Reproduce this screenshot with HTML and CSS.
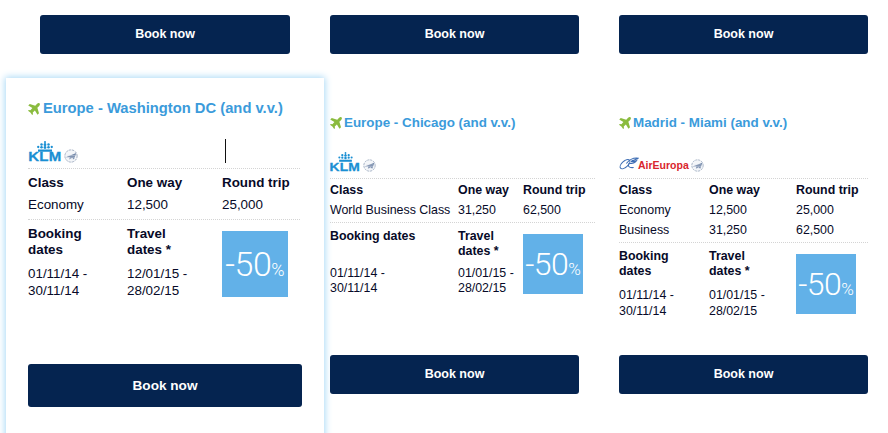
FILE: index.html
```html
<!DOCTYPE html>
<html lang="en">
<head>
<meta charset="utf-8">
<title>Flight offers</title>
<link rel="stylesheet" href="styles.css">
</head>
<body>
<svg class="defs" width="0" height="0" aria-hidden="true">
  <symbol id="plane" viewBox="0 0 24 24">
    <path d="M23.200.8c-1.300-1.300-3.600-.6-5 .8l-3.700 3.700L3.500 2 .5 5l8.300 5.200-4 4.300-3.200-.5L0 15.700l4.800 3.500L8.300 24l1.700-1.600-.5-3.200 4.300-4 5.200 8.300 3-3-3.300-11 3.700-3.700c1.400-1.400 2.100-3.500.8-4.800z"/>
  </symbol>
  <symbol id="crown" viewBox="0 0 32 22">
    <circle cx="16" cy="2" r="2"/><rect x="15" y="3" width="2" height="4"/>
    <circle cx="9" cy="7" r="2.500"/><circle cx="16" cy="7.500" r="2.800"/><circle cx="23" cy="7" r="2.500"/>
    <circle cx="2.500" cy="12" r="2.300"/><circle cx="9" cy="12.500" r="2.500"/><circle cx="16" cy="13" r="2.800"/><circle cx="23" cy="12.500" r="2.500"/><circle cx="29.500" cy="12" r="2.300"/>
    <rect x="2" y="17" width="28" height="4.500"/>
  </symbol>
  <symbol id="skyteam" viewBox="0 0 24 24">
    <circle cx="12" cy="12" r="10.500" fill="#f4f6f9" stroke="#98a6bc" stroke-width="1.500" stroke-dasharray="4 1.500"/>
    <path d="M3 14 21 7l-4 11-3-3-5 3 1-4z" fill="#6f84a6"/>
    <path d="M6 11h13M6 14h13M9 17h7" stroke="#dfe5ee" stroke-width=".9" fill="none"/>
  </symbol>
  <symbol id="swirl" viewBox="0 0 30 20">
    <ellipse cx="9" cy="11" rx="9" ry="4.500" transform="rotate(-42 9 11)" fill="none" stroke="#3f6fb5" stroke-width="1.600"/>
    <path d="M11 10c4-5 11-9 18-8-3 2-7 3-11 5 3 0 6 0 8-1-2 3-7 4-11 4-2 3-1 7 7 6" fill="none" stroke="#3f6fb5" stroke-width="1.600"/>
  </symbol>
</svg>

<main class="offers">
  <section class="col col-featured">
    <a class="btn btn-top-featured">Book now</a>
    <article class="card card-featured">
      <h2 class="title"><svg class="plane"><use href="#plane"/></svg>Europe - Washington DC (and v.v.)</h2>
      <div class="logo-row">
        <span class="klm"><svg class="crown"><use href="#crown"/></svg><span class="klm-text">KLM</span></span>
        <svg class="sky"><use href="#skyteam"/></svg>
      </div>
      <span class="caret"></span>
      <div class="fares">
        <b>Class</b><b>One way</b><b>Round trip</b>
        <span>Economy</span><span>12,500</span><span>25,000</span>
      </div>
      <div class="dates">
        <div class="date-col"><b>Booking dates</b><p>01/11/14 - 30/11/14</p></div>
        <div class="date-col"><b>Travel dates *</b><p>12/01/15 - 28/02/15</p></div>
        <div class="promo">-50<small>%</small></div>
      </div>
      <a class="btn btn-featured">Book now</a>
    </article>
  </section>

  <section class="col col-chicago">
    <a class="btn">Book now</a>
    <article class="card">
      <h2 class="title"><svg class="plane"><use href="#plane"/></svg>Europe - Chicago (and v.v.)</h2>
      <div class="logo-row">
        <span class="klm"><svg class="crown"><use href="#crown"/></svg><span class="klm-text">KLM</span></span>
        <svg class="sky"><use href="#skyteam"/></svg>
      </div>
      <div class="fares">
        <b>Class</b><b>One way</b><b>Round trip</b>
        <span>World Business Class</span><span>31,250</span><span>62,500</span>
      </div>
      <div class="dates">
        <div class="date-col"><b class="one-line">Booking dates</b><p>01/11/14 - 30/11/14</p></div>
        <div class="date-col"><b>Travel dates *</b><p>01/01/15 - 28/02/15</p></div>
        <div class="promo">-50<small>%</small></div>
      </div>
      <a class="btn">Book now</a>
    </article>
  </section>

  <section class="col col-miami">
    <a class="btn">Book now</a>
    <article class="card">
      <h2 class="title"><svg class="plane"><use href="#plane"/></svg>Madrid - Miami (and v.v.)</h2>
      <div class="logo-row">
        <svg class="swirl"><use href="#swirl"/></svg><span class="aireuropa">AirEuropa</span>
        <svg class="sky"><use href="#skyteam"/></svg>
      </div>
      <div class="fares">
        <b>Class</b><b>One way</b><b>Round trip</b>
        <span>Economy</span><span>12,500</span><span>25,000</span>
        <span>Business</span><span>31,250</span><span>62,500</span>
      </div>
      <div class="dates">
        <div class="date-col"><b>Booking dates</b><p>01/11/14 - 30/11/14</p></div>
        <div class="date-col"><b>Travel dates *</b><p>01/01/15 - 28/02/15</p></div>
        <div class="promo">-50<small>%</small></div>
      </div>
      <a class="btn">Book now</a>
    </article>
  </section>
</main>
</body>
</html>
```

FILE: styles.css
```css
html, body { margin: 0; height: 433px; overflow: hidden; background: #fff; }
body { font-family: "Liberation Sans", Arial, sans-serif; color: #070a28; font-size: 12.4px; line-height: 15px; }
.defs { position: absolute; }
.offers { display: flex; padding: 15px 0 0 6px; }
.col { display: flex; flex-direction: column; width: 249px; }
.col-featured { width: 318px; margin-right: 6px; }
.col-chicago { margin-right: 40px; }

.btn { display: flex; align-items: center; justify-content: center; height: 39px; background: #052450; color: #fff; font-weight: 700; font-size: 12.500px; border-radius: 3px; }
.btn-top-featured { width: 250px; margin-left: 34px; }
.btn-featured { height: 43px; font-size: 13.600px; }

.card { position: relative; margin-top: 61px; }
.title { display: flex; align-items: center; margin: 0; height: 15px; font-size: 13.400px; line-height: 15px; color: #3b9bdb; font-weight: 700; }
.plane { width: 12px; height: 12px; fill: #8abb3e; margin-right: 2px; flex: none; }

.logo-row { display: flex; align-items: flex-end; height: 22px; margin-top: 20px; }
.klm { display: flex; flex-direction: column; align-items: center; width: 30px; color: #1a8fd3; }
.crown { width: 15px; height: 10px; fill: #1a8fd3; }
.klm-text { font-size: 11.500px; line-height: 10px; font-weight: 700; letter-spacing: .2px; transform: scaleX(1.200); -webkit-text-stroke: .3px #1a8fd3; }
.sky { width: 13px; height: 13px; margin-left: 3px; }
.swirl { width: 20px; height: 15px; margin-right: -1px; margin-bottom: 1px; flex: none; }
.aireuropa { font-family: "Liberation Sans Narrow", "Liberation Sans", sans-serif; color: #d9252c; font-size: 10.500px; line-height: 12px; font-weight: 700; margin-bottom: 1px; }
.col-miami .sky { margin-left: 2px; }

.fares { display: grid; margin-top: 6px; padding: 4px 0; border-top: 1px dotted #d4d4d4; border-bottom: 1px dotted #d4d4d4; row-gap: 5px; white-space: nowrap; }
.col-chicago .fares { grid-template-columns: 128px 65px 72px; width: 265px; }
.col-chicago .dates { grid-template-columns: 128px 65px 60px; width: 265px; height: 126px; }
.col-miami .fares { grid-template-columns: 90px 87px 72px; }
.col-miami .dates { grid-template-columns: 90px 87px 60px; height: 106px; }

.dates { display: grid; padding-top: 6px; }
.date-col b { display: block; width: 60px; }
.date-col .one-line { width: auto; }
.date-col p { margin: 8px 0 0; width: 65px; }
.col-miami .date-col p { line-height: 16px; }
.col-chicago .date-col p { margin-top: 7px; }
.col-chicago .date-col:first-child p { margin-top: 22px; }
.promo { font-family: Roboto, "Liberation Sans", sans-serif; font-weight: 300; width: 60px; height: 60px; text-align: center; background: #62b1e8; color: #fff; font-size: 32px; line-height: 60px; letter-spacing: -.5px; white-space: nowrap; }
.promo small { font-size: 17px; letter-spacing: 0; }
.col-chicago .promo { margin-top: 5px; }
.col-miami .promo { margin-top: 5px; }

.card-featured { margin-top: 24px; height: 370px; padding: 23px 22px 0; box-sizing: border-box; background: #fff; box-shadow: 0 0 7px 1px #a9d9f6; }
.card-featured .title { font-size: 14.750px; }
.card-featured .plane { margin-right: 3px; }
.card-featured .logo-row { margin-top: 23px; height: 24px; }
.card-featured .klm { width: 33px; }
.card-featured .crown { width: 16px; height: 11px; }
.card-featured .klm-text { font-size: 12.500px; line-height: 11px; }
.card-featured .sky { width: 14px; height: 14px; }
.card-featured .fares { font-size: 13.400px; grid-template-columns: 99px 95px 78px; margin: 5px 2px 0 0; padding: 6px 0 7px; row-gap: 7px; }
.card-featured .dates { font-size: 13.400px; grid-template-columns: 99px 95px 66px; padding-top: 6px; height: 138px; line-height: 16px; }
.card-featured .date-col b { width: 70px; }
.card-featured .date-col p { margin: 7px 0 0; width: 80px; line-height: 17px; }
.card-featured .promo { width: 66px; height: 66px; font-size: 34px; line-height: 66px; margin-top: 5px; }
.card-featured .promo small { font-size: 18px; }
.caret { position: absolute; left: 219px; top: 61px; width: 1px; height: 24px; background: #111; }
```
